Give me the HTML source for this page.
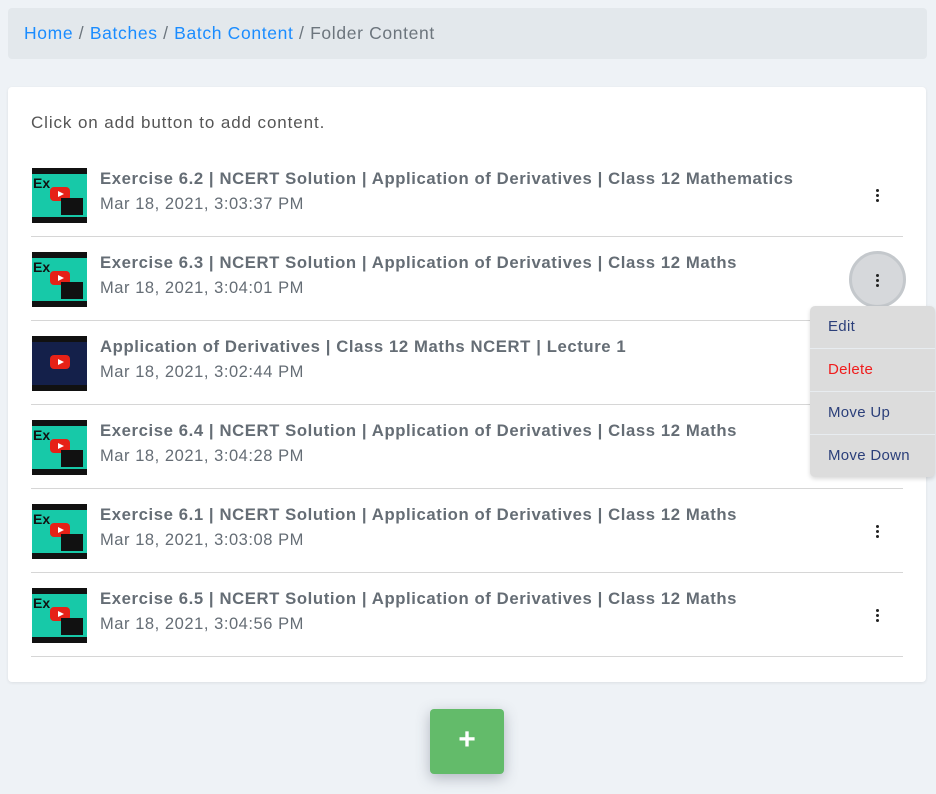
<!DOCTYPE html>
<html><head><meta charset="utf-8"><style>
*{box-sizing:border-box;margin:0;padding:0}
body{width:936px;height:794px;background:#eef2f6;font-family:"Liberation Sans",sans-serif;position:relative;overflow:hidden}
.bc{position:absolute;left:8px;top:8px;width:919px;height:51px;background:#e3e8ec;border-radius:4px;font-size:17.5px;letter-spacing:0.65px;line-height:51px;padding-left:16px;color:#6c757d}
.bc a{color:#1a8cff;text-decoration:none}
.card{position:absolute;left:8px;top:87px;width:918px;height:595px;background:#fff;border-radius:4px;box-shadow:0 1px 3px rgba(0,0,0,.08)}
.hint{position:absolute;left:23px;top:26px;font-size:17px;letter-spacing:0.9px;color:#555}
.row{position:absolute;left:23px;width:872px;height:84px;border-bottom:1px solid #d6d6d6}
.th{position:absolute;left:1px;top:15px;width:55px;height:55px;background:#17c9a8;border-top:6px solid #111;border-bottom:6px solid #111;overflow:hidden}
.th.b{background:#14204a}
.th .ex{position:absolute;left:1px;top:1px;font:bold 14px "Liberation Sans";color:#111}
.th .yt{position:absolute;left:18px;top:13px;width:20px;height:14px;background:#e62117;border-radius:4px}
.th .yt:after{content:"";position:absolute;left:8px;top:4px;border-left:6px solid #fff;border-top:3px solid transparent;border-bottom:3px solid transparent}
.th .vs{position:absolute;right:4px;bottom:2px;width:22px;height:17px;background:#111}
.t{position:absolute;left:69px;top:16px;font-size:16.7px;letter-spacing:0.6px;font-weight:bold;color:#656d75;white-space:nowrap}
.d{position:absolute;left:69px;top:42px;font-size:16.5px;letter-spacing:0.55px;color:#656d75}
.dots{position:absolute;left:845px;top:36px;width:4px}
.dots i{display:block;width:3px;height:3px;background:#222;border-radius:50%;margin-bottom:2px}
.circ{position:absolute;left:849px;top:251px;width:57px;height:57px;border-radius:50%;background:#d6d8db;border:3px solid #c4c8cc}
.circ .dots{left:24px;top:20px}
.menu{position:absolute;left:810px;top:306px;width:125px;height:171px;background:#dcdcdc;border-radius:5px;box-shadow:0 2px 4px rgba(0,0,0,.15)}
.menu div{height:43px;line-height:42px;padding-left:18px;font-size:15px;letter-spacing:0.3px;color:#2b3f7a;border-bottom:1px solid #e8ecf0}
.menu div:last-child{border:none}
.add{position:absolute;left:430px;top:709px;width:74px;height:65px;background:#63bb6a;border-radius:4px;box-shadow:0 4px 14px rgba(60,70,90,.35);color:#fff;font-size:30px;font-weight:bold;text-align:center;line-height:62px}
</style></head><body>
<div class="bc"><a>Home</a> / <a>Batches</a> / <a>Batch Content</a> / Folder Content</div>
<div class="card">
<div class="hint">Click on add button to add content.</div>

<div class="row" style="top:66px"><div class="th"><span class="ex">Ex</span><span class="yt"></span><span class="vs"></span></div><div class="t">Exercise 6.2 | NCERT Solution | Application of Derivatives | Class 12 Mathematics</div><div class="d">Mar 18, 2021, 3:03:37 PM</div><div class="dots"><i></i><i></i><i></i></div></div>

<div class="row" style="top:150px"><div class="th"><span class="ex">Ex</span><span class="yt"></span><span class="vs"></span></div><div class="t">Exercise 6.3 | NCERT Solution | Application of Derivatives | Class 12 Maths</div><div class="d">Mar 18, 2021, 3:04:01 PM</div></div>

<div class="row" style="top:234px"><div class="th b"><span class="yt"></span></div><div class="t">Application of Derivatives | Class 12 Maths NCERT | Lecture 1</div><div class="d">Mar 18, 2021, 3:02:44 PM</div></div>

<div class="row" style="top:318px"><div class="th"><span class="ex">Ex</span><span class="yt"></span><span class="vs"></span></div><div class="t">Exercise 6.4 | NCERT Solution | Application of Derivatives | Class 12 Maths</div><div class="d">Mar 18, 2021, 3:04:28 PM</div></div>

<div class="row" style="top:402px"><div class="th"><span class="ex">Ex</span><span class="yt"></span><span class="vs"></span></div><div class="t">Exercise 6.1 | NCERT Solution | Application of Derivatives | Class 12 Maths</div><div class="d">Mar 18, 2021, 3:03:08 PM</div><div class="dots"><i></i><i></i><i></i></div></div>

<div class="row" style="top:486px"><div class="th"><span class="ex">Ex</span><span class="yt"></span><span class="vs"></span></div><div class="t">Exercise 6.5 | NCERT Solution | Application of Derivatives | Class 12 Maths</div><div class="d">Mar 18, 2021, 3:04:56 PM</div><div class="dots"><i></i><i></i><i></i></div></div>
</div>
<div class="circ"><div class="dots"><i></i><i></i><i></i></div></div>
<div class="menu"><div>Edit</div><div style="color:#f01c1c">Delete</div><div>Move Up</div><div>Move Down</div></div>
<div class="add">+</div>
</body></html>
